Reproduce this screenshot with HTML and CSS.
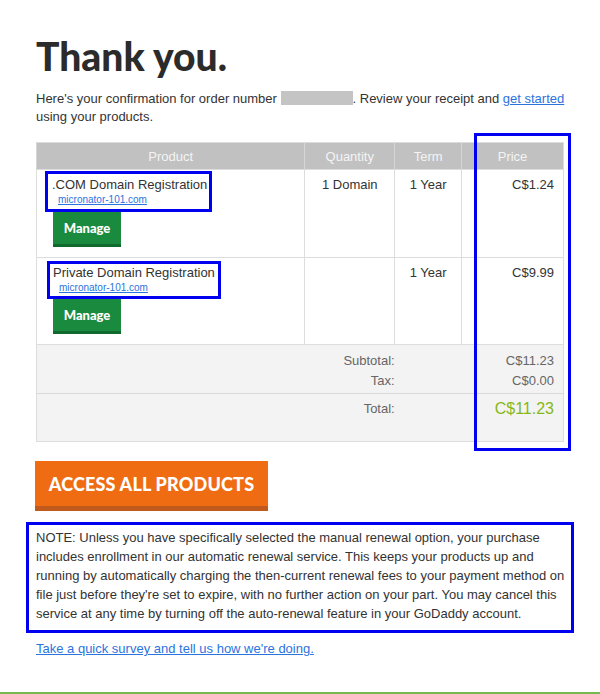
FILE: index.html
```html
<!DOCTYPE html>
<html lang="en">
<head>
    <meta charset="UTF-8">
    <title>Thank you</title>
    <link rel="stylesheet" href="styles.css">
</head>
<body>
<div class="page">
    <h1>Thank you.</h1>
    <p class="intro">Here's your confirmation for order number <span class="redacted"></span>. Review your receipt and <a href="#">get started</a> using your products.</p>

    <div class="receipt">
        <table>
            <thead>
                <tr>
                    <th class="col-product">Product</th>
                    <th class="col-qty">Quantity</th>
                    <th class="col-term">Term</th>
                    <th class="col-price">Price</th>
                </tr>
            </thead>
            <tbody>
                <tr class="item">
                    <td class="product">
                        <div class="mark">
                            <div class="name">.COM Domain Registration</div>
                            <a class="domain" href="#">micronator-101.com</a>
                        </div>
                        <a class="manage" href="#">Manage</a>
                    </td>
                    <td>1 Domain</td>
                    <td>1 Year</td>
                    <td class="price">C$1.24</td>
                </tr>
                <tr class="item">
                    <td class="product">
                        <div class="mark mark-wide">
                            <div class="name">Private Domain Registration</div>
                            <a class="domain" href="#">micronator-101.com</a>
                        </div>
                        <a class="manage" href="#">Manage</a>
                    </td>
                    <td></td>
                    <td>1 Year</td>
                    <td class="price">C$9.99</td>
                </tr>
                <tr class="sum first">
                    <td colspan="2" class="label">Subtotal:</td>
                    <td></td>
                    <td class="price">C$11.23</td>
                </tr>
                <tr class="sum last">
                    <td colspan="2" class="label">Tax:</td>
                    <td></td>
                    <td class="price">C$0.00</td>
                </tr>
                <tr class="total">
                    <td colspan="2" class="label">Total:</td>
                    <td></td>
                    <td class="price">C$11.23</td>
                </tr>
            </tbody>
        </table>
        <!-- annotation drawn over the price column -->
        <div class="price-mark"></div>
    </div>

    <a class="access" href="#">ACCESS ALL PRODUCTS</a>

    <p class="note">NOTE: Unless you have specifically selected the manual renewal option, your purchase includes enrollment in our automatic renewal service. This keeps your products up and running by automatically charging the then-current renewal fees to your payment method on file just before they're set to expire, with no further action on your part. You may cancel this service at any time by turning off the auto-renewal feature in your GoDaddy account.</p>

    <a class="survey" href="#">Take a quick survey and tell us how we're doing.</a>
</div>
<div class="footer"></div>
</body>
</html>
```

FILE: styles.css
```css
/* Base */
* {
    box-sizing: border-box;
}

body {
    margin: 0;
    font-family: "Liberation Sans", Arial, sans-serif;
    font-size: 13px;
    color: #333;
    background: #fff;
}

a {
    color: #2b73dd;
}

.page {
    width: 600px;
    padding: 34px 36px 0 36px;
    height: 692px;
}

/* Heading */
h1 {
    font-family: Lato, "Open Sans", sans-serif;
    font-weight: 900;
    font-size: 39px;
    line-height: 44px;
    letter-spacing: 0;
    color: #2b2b2b;
    margin: 0 0 12px 0;
}

.intro {
    margin: 0 0 16px 0;
    line-height: 18px;
    width: 530px;
}

.redacted {
    display: inline-block;
    width: 72px;
    height: 14px;
    background: #c4c4c4;
    vertical-align: -2px;
}

/* Receipt table */
.receipt {
    position: relative;
    width: 528px;
}

table {
    width: 528px;
    border-collapse: collapse;
    border: 1px solid #ddd;
}

th {
    background: #c1c1c1;
    color: #f4f4f4;
    font-weight: normal;
    height: 27px;
    padding: 0;
    border-left: 1px solid #d6d6d6;
    text-align: center;
}

.col-product { width: 269px; }
.col-qty { width: 90px; }
.col-term { width: 67px; }
.col-price { width: 102px; }

.item td {
    border: 1px solid #ddd;
    vertical-align: top;
    text-align: center;
    padding: 7px 8px 10px 8px;
}

.item td.product {
    text-align: left;
    padding: 1px 8px 10px 8px;
}

.item td.price,
.sum td.price,
.total td.price {
    text-align: right;
    padding-right: 9px;
}

.mark {
    display: inline-block;
    border: 3px solid #0000f0;
    padding: 2px 2px 3px 4px;
}

.mark-wide {
    margin: 2px 0 0 2px;
    padding: 0 3px 2px 3px;
}

.name {
    line-height: 17px;
}

.domain {
    display: block;
    font-size: 10px;
    line-height: 13px;
    margin-left: 6px;
}

.manage {
    display: block;
    width: 68px;
    height: 35px;
    margin-left: 8px;
    background: #1a8a3f;
    border-bottom: 3px solid #106a2e;
    color: #fff;
    text-decoration: none;
    font-family: Lato, sans-serif;
    font-weight: 900;
    font-size: 13px;
    line-height: 33px;
    text-align: center;
}

/* Totals */
.sum td,
.total td {
    background: #f3f3f3;
    color: #666;
    padding: 0;
}

.sum td.label,
.total td.label {
    text-align: right;
}

.sum.first td {
    padding-top: 6px;
    line-height: 20px;
}

.sum.last td {
    padding-bottom: 2px;
    line-height: 20px;
}

.total td {
    border-top: 1px solid #d8d8d8;
    vertical-align: top;
    height: 48px;
    padding-top: 7px;
}

.total td.price {
    color: #86b817;
    font-size: 16px;
    padding-top: 6px;
}

.price-mark {
    position: absolute;
    left: 438px;
    top: -9px;
    width: 97px;
    height: 318px;
    border: 3px solid #0000f0;
}

/* Call to action */
.access {
    display: inline-block;
    margin-top: 19px;
    width: 233px;
    height: 50px;
    margin-left: -1px;
    background: #ef6c13;
    border-bottom: 5px solid #bf5a1c;
    color: #fff;
    text-decoration: none;
    font-family: Lato, sans-serif;
    font-weight: 900;
    font-size: 18px;
    letter-spacing: 0.2px;
    line-height: 46px;
    text-align: center;
}

.note {
    margin: 11px 0 0 -10px;
    width: 548px;
    border: 3px solid #0000f0;
    padding: 3px 6px 7px 7px;
    line-height: 19px;
}

.survey {
    display: inline-block;
    margin-top: 7px;
    line-height: 18px;
}

.footer {
    border-top: 2px solid #79b84c;
}
```
